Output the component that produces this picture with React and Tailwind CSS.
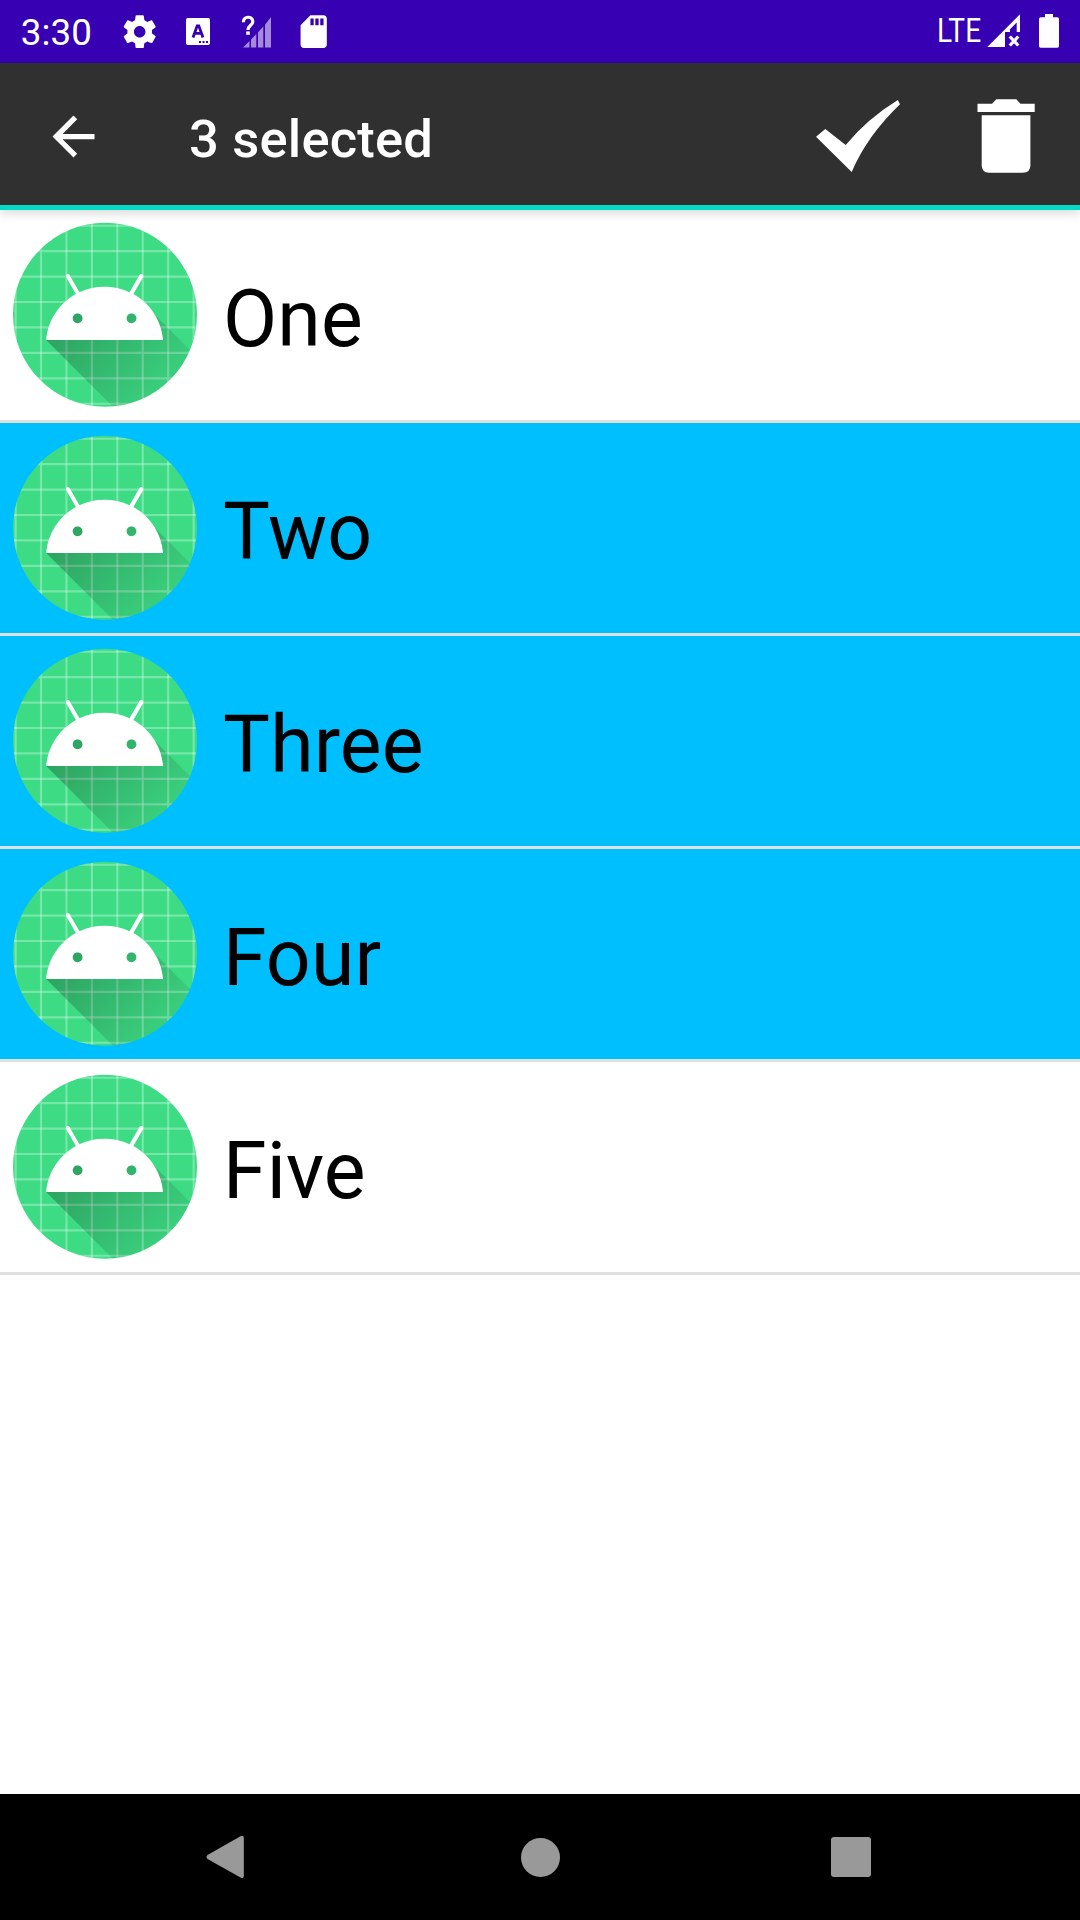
import React from "react";

const items = [
  { label: "One", selected: false },
  { label: "Two", selected: true },
  { label: "Three", selected: true },
  { label: "Four", selected: true },
  { label: "Five", selected: false },
];

const gridLines = [9, 19, 29, 39, 49, 59, 69, 79, 89, 99];

function LauncherIcon({ id }) {
  return (
    <svg className="h-[210px] w-[210px] shrink-0" viewBox="0 0 210 210">
      <defs>
        <clipPath id={`clip-${id}`}>
          <circle cx="105" cy="104.8" r="92" />
        </clipPath>
        <linearGradient id={`shade-${id}`} gradientUnits="userSpaceOnUse" x1="42.9492" y1="49.59793" x2="85.84757" y2="92.4963">
          <stop offset="0" stopColor="#000" stopOpacity="0.267" />
          <stop offset="1" stopColor="#000" stopOpacity="0" />
        </linearGradient>
      </defs>
      <g clipPath={`url(#clip-${id})`}>
        <rect width="210" height="210" fill="#3ddc84" />
        <g transform="translate(-32.7 -32.6) scale(2.543)">
          {gridLines.map((p) => (
            <path key={p} d={`M${p},0V108M0,${p}H108`} stroke="#fff" strokeOpacity="0.3" strokeWidth="0.85" />
          ))}
          <path
            d="M31,63.928c0,0 6.4,-11 12.1,-13.1c7.2,-2.6 26,-1.4 26,-1.4l38.1,38.1L107,108.928l-32,-1L31,63.928z"
            fill={`url(#shade-${id})`}
          />
          <path
            fill="#fff"
            d="M65.3,45.828l3.8,-6.6c0.2,-0.4 0.1,-0.9 -0.3,-1.1c-0.4,-0.2 -0.9,-0.1 -1.1,0.3l-3.9,6.7c-6.3,-2.8 -13.4,-2.8 -19.7,0l-3.9,-6.7c-0.2,-0.4 -0.7,-0.5 -1.1,-0.3C38.8,38.328 38.7,38.828 38.9,39.228l3.8,6.6C36.2,49.428 31.7,56.028 31,63.928h46C76.3,56.028 71.8,49.428 65.3,45.828zM43.4,57.328c-0.8,0 -1.5,-0.5 -1.8,-1.2c-0.3,-0.7 -0.1,-1.5 0.4,-2.1c0.5,-0.5 1.4,-0.7 2.1,-0.4c0.7,0.3 1.2,1 1.2,1.8C45.3,56.528 44.5,57.328 43.4,57.328zM64.6,57.328c-0.8,0 -1.5,-0.5 -1.8,-1.2s-0.1,-1.5 0.4,-2.1c0.5,-0.5 1.4,-0.7 2.1,-0.4c0.7,0.3 1.2,1 1.2,1.8C66.5,56.528 65.6,57.328 64.6,57.328z"
          />
        </g>
      </g>
    </svg>
  );
}

function StatusBar() {
  return (
    <header className="flex h-[63px] shrink-0 items-center bg-[#3700b3] text-white">
      <span className="ml-[20.7px] w-[99.3px] pt-[2px] text-[36.75px] leading-[43px] tracking-[0.15px]">3:30</span>
      <svg className="h-[39.4px] w-[39.4px]" viewBox="0 0 24 24" fill="currentColor">
        <path d="M19.43 12.98c.04-.32.07-.64.07-.98s-.03-.66-.07-.98l2.11-1.65c.19-.15.24-.42.12-.64l-2-3.46c-.12-.22-.39-.3-.61-.22l-2.49 1c-.52-.4-1.08-.73-1.69-.98l-.38-2.65C14.46 2.18 14.25 2 14 2h-4c-.25 0-.46.18-.49.42l-.38 2.65c-.61.25-1.17.59-1.69.98l-2.49-1c-.23-.09-.49 0-.61.22l-2 3.46c-.13.22-.07.49.12.64l2.11 1.65c-.04.32-.07.65-.07.98s.03.66.07.98l-2.11 1.65c-.19.15-.24.42-.12.64l2 3.46c.12.22.39.3.61.22l2.49-1c.52.4 1.08.73 1.69.98l.38 2.65c.03.24.24.42.49.42h4c.25 0 .46-.18.49-.42l.38-2.65c.61-.25 1.17-.59 1.69-.98l2.49 1c.23.09.49 0 .61-.22l2-3.46c.12-.22.07-.49-.12-.64l-2.11-1.65zM12 15.5c-1.93 0-3.5-1.57-3.5-3.5s1.57-3.5 3.5-3.5 3.5 1.57 3.5 3.5-1.57 3.5-3.5 3.5z" />
      </svg>
      <svg className="ml-[26.6px] h-[27px] w-[24px]" viewBox="0 0 24 27">
        <rect width="24" height="27" rx="1.8" fill="#fff" />
        <path d="M7 19.5L11.2 7.8H12.8L17 19.5M8.8 15.4H15.2" fill="none" stroke="#3700b3" strokeWidth="2.8" />
        <path d="M13 23h2v2h-2zM16.5 23h2v2h-2zM20 23h2v2h-2z" fill="#3700b3" />
      </svg>
      <svg className="mt-px ml-[30px] h-[34px] w-[32px]" viewBox="240 15 32 34">
        <path d="M243 47.5L249.5 41V47.5ZM251 39.5L256.3 34V47.5H251ZM258 32.2L263.3 26.6V47.5H258ZM265 24.8L271 17V47.5H265Z" fill="#a58adb" />
        <path d="M243.3 22.2C243.3 15.7 252.8 15.7 252.8 21.7C252.8 25.5 248 25.2 248 30" fill="none" stroke="#fff" strokeWidth="3.2" />
        <path d="M246.2 31.4h3.6v3.4h-3.6z" fill="#fff" />
      </svg>
      <svg className="ml-[22.3px] h-[39.4px] w-[39.4px]" viewBox="0 0 24 24" fill="currentColor">
        <path d="M18 2h-8L4.02 8 4 20c0 1.1.9 2 2 2h12c1.1 0 2-.9 2-2V4c0-1.1-.9-2-2-2zm-6 6h-2V4h2v4zm3 0h-2V4h2v4zm3 0h-2V4h2v4z" />
      </svg>
      <span className="ml-auto w-[50px] origin-left scale-x-[0.87] pb-px text-[32.3px] leading-[38px]">LTE</span>
      <svg className="mb-px h-[34px] w-[34px]" viewBox="987 14 34 34">
        <path d="M987.3 47L1020 14.3V32H1016.7V22.5L1010 29.3V32H1005V47Z" fill="#fff" />
        <path d="M1009.8 36.5L1018.3 45.5M1018.3 36.5L1009.8 45.5" stroke="#fff" strokeWidth="3.2" />
      </svg>
      <svg className="mr-[21px] mb-px ml-[18px] h-[34px] w-[20px]" viewBox="0 0 20 34" fill="#fff">
        <path d="M6 0H14V3.3H18.3Q20 3.3 20 5V32Q20 33.8 18.3 33.8H1.7Q0 33.8 0 32V5Q0 3.3 1.7 3.3H6Z" />
      </svg>
    </header>
  );
}

function ActionBar() {
  return (
    <div className="z-10 flex h-[147px] shrink-0 items-center border-b-[5px] border-[#03dac5] bg-[#303030] pt-[5px] pl-[42.3px] text-white shadow-[0_3px_10px_rgba(0,0,0,0.16)]">
      <svg className="h-[63px] w-[63px]" viewBox="0 0 24 24" fill="currentColor">
        <path d="M20,11H7.83l5.59,-5.59L12,4l-8,8l8,8l1.41,-1.41L7.83,13H20v-2z" />
      </svg>
      <h1 className="ml-[83.7px] pt-[5px] text-[52.5px] leading-[62px] font-medium tracking-[0.2px]">3 selected</h1>
      <svg className="ml-auto h-[84px] w-[94px]" viewBox="811 95 94 84" fill="currentColor">
        <path d="M816 136.7L825.3 129L845.7 145Q867 119 897.8 100L900 104.3Q867 136 851.7 172Z" />
      </svg>
      <svg className="mr-[40px] ml-[67px] h-[84px] w-[68px]" viewBox="972 95 68 84" fill="currentColor">
        <path d="M977.5 103.8H992L996.3 99.2H1016.3L1020.5 103.8H1034.7V112H977.5Z" />
        <path d="M981.7 115.3H1030.4V165.3Q1030.4 172.7 1022.9 172.7H989.2Q981.7 172.7 981.7 165.3Z" />
      </svg>
    </div>
  );
}

function Row({ label, selected }) {
  return (
    <li className={`flex h-[213px] items-center border-b-[3px] border-[#e0e0e0] ${selected ? "bg-[#00bfff]" : "bg-white"}`}>
      <LauncherIcon id={label} />
      <span className="ml-[13px] pt-[8px] text-[78.75px] leading-[92px] tracking-[0.15px] text-black">{label}</span>
    </li>
  );
}

function NavigationBar() {
  return (
    <nav className="flex h-[126px] shrink-0 items-center justify-between bg-black pr-[209px] pl-[206px] text-[#999999]">
      <svg className="h-[44px] w-[40px]" viewBox="0 0 40 44" fill="currentColor">
        <path d="M1.5 20L34.5 1.2Q37.8 0 37.8 3V41Q37.8 44 34.5 42.4L1.5 24Q-0.5 22 1.5 20Z" />
      </svg>
      <span className="ml-[3px] h-[39px] w-[39px] rounded-full bg-[#999999]" />
      <span className="h-[40px] w-[40px] rounded-[3px] bg-[#999999]" />
    </nav>
  );
}

export default function App() {
  return (
    <div className="flex h-[1920px] w-[1080px] flex-col overflow-hidden bg-white font-['Roboto',sans-serif]">
      <StatusBar />
      <ActionBar />
      <ul className="flex-1">
        {items.map((item) => (
          <Row key={item.label} {...item} />
        ))}
      </ul>
      <NavigationBar />
    </div>
  );
}
